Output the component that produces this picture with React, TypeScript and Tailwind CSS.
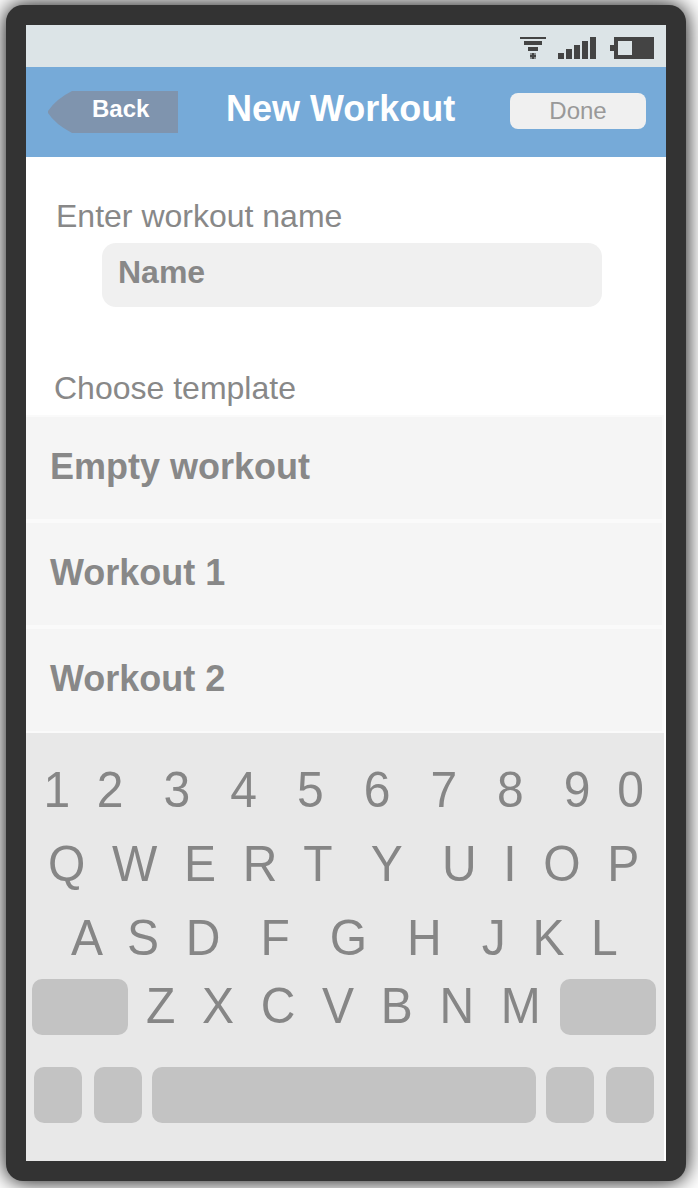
import React from "react";

const templates = ["Empty workout", "Workout 1", "Workout 2"];

const keyText =
  "block whitespace-pre text-[48px] leading-[48px] origin-[50%_85%] scale-y-[1.04] text-[#868686]";

function StatusIcons() {
  return (
    <svg width="134" height="22" viewBox="0 0 134 22" fill="#444" shapeRendering="crispEdges">
      <rect x="0" y="0" width="26" height="2" />
      <rect x="4" y="4" width="18" height="4" />
      <rect x="8" y="10" width="10" height="4" />
      <rect x="10" y="16" width="6" height="6" fillOpacity="0.55" />
      <rect x="12" y="16" width="2" height="6" />
      <rect x="10" y="18" width="6" height="2" />
      <rect x="38" y="16" width="6" height="6" />
      <rect x="46" y="12" width="6" height="10" />
      <rect x="54" y="8" width="6" height="14" />
      <rect x="62" y="4" width="6" height="18" />
      <rect x="70" y="0" width="6" height="22" />
      <path fillRule="evenodd" d="M94 0H134V22H94V14H90V8H94ZM98 4V18H112V4Z" />
    </svg>
  );
}

function BackButton() {
  return (
    <button className="relative h-[42px] w-[130px] text-left">
      <svg className="absolute inset-0" width="130" height="42" viewBox="0 0 130 42">
        <path d="M24 0H130V42H24Q7 33 0 22V20Q8 8 24 0Z" fill="#7f94ae" />
      </svg>
      <span className="relative -top-[3px] block pl-[44px] text-2xl leading-[42px] font-bold text-white">
        Back
      </span>
    </button>
  );
}

function BlankKey({ className }: { className: string }) {
  return <div className={`h-[56px] shrink-0 rounded-[10px] bg-[#c3c3c3] ${className}`} />;
}

export default function App() {
  return (
    <div className="h-[1188px] w-[698px] overflow-hidden bg-white pt-[5px] pl-[6px] font-['Liberation_Sans',Arial,sans-serif]">
      <div className="h-[1176px] w-[680px] rounded-[17px] bg-[#333] p-[20px] shadow-[0_0_22px_#000]">
        <div className="flex h-[1136px] w-[640px] flex-col overflow-hidden bg-white">
          <div className="flex h-[42px] shrink-0 justify-end bg-[#dce4e7] pt-[12px] pr-[12px]">
            <StatusIcons />
          </div>

          <header className="flex h-[90px] shrink-0 items-start bg-[#76aad8] pt-[24px] pl-[22px]">
            <BackButton />
            <h1 className="ml-[48px] w-[284px] text-4xl leading-[36px] font-bold whitespace-nowrap text-white">
              New Workout
            </h1>
            <button className="mt-[2px] h-[36px] w-[136px] rounded-[8px] bg-[#f0f0f0] text-2xl leading-[36px] text-[#999]">
              Done
            </button>
          </header>

          <section className="h-[258px] shrink-0 text-[32px] leading-[32px] text-[#888]">
            <label className="block pt-[43px] pl-[30px]">Enter workout name</label>
            <div className="mt-[11px] ml-[76px] h-[64px] w-[500px] rounded-[14px] bg-[#f0f0f0] pt-[13px] pl-[16px] font-bold">
              Name
            </div>
            <h2 className="pt-[65px] pl-[28px]">Choose template</h2>
          </section>

          <ul className="w-[638px] shrink-0">
            {templates.map((name) => (
              <li
                key={name}
                className="h-[106px] border-y-2 border-r-2 border-[#fafafa] bg-[#f5f5f5] pt-[32px] pl-[24px] text-4xl leading-[36px] font-bold text-[#888]"
              >
                {name}
              </li>
            ))}
          </ul>

          <div className="h-[428px] w-[638px] shrink-0 bg-[#e8e8e8] pt-[34px]">
            <span className={`${keyText} pl-[17.5px]`}>{"1  2   3   4   5   6   7   8   9  0"}</span>
            <span className={`${keyText} mt-[26px] pl-[22px]`}>{"Q  W  E  R  T   Y   U  I  O  P"}</span>
            <span className={`${keyText} mt-[26px] pl-[45px]`}>{"A  S  D   F   G   H   J  K  L"}</span>
            <div className="mt-[16px] flex items-start pl-[6px]">
              <BlankKey className="w-[96px]" />
              <span className={`${keyText} mt-[4px] w-[432px] pl-[18px]`}>{"Z  X  C  V  B  N  M"}</span>
              <BlankKey className="w-[96px]" />
            </div>
            <div className="mt-[32px] flex pl-[8px]">
              <BlankKey className="w-[48px]" />
              <BlankKey className="ml-[12px] w-[48px]" />
              <BlankKey className="ml-[10px] w-[384px]" />
              <BlankKey className="ml-[10px] w-[48px]" />
              <BlankKey className="ml-[12px] w-[48px]" />
            </div>
          </div>
        </div>
      </div>
    </div>
  );
}
